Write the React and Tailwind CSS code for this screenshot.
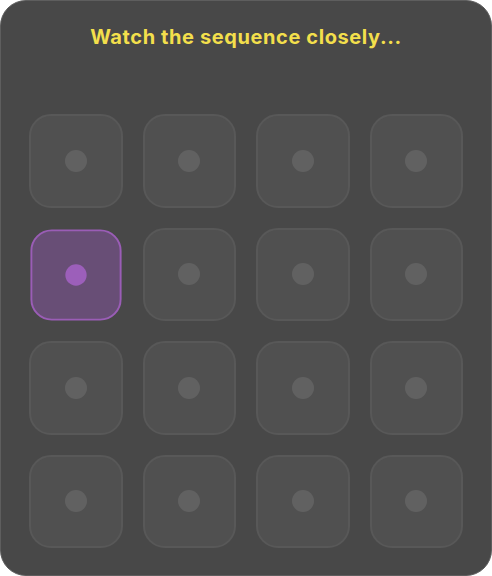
import React from 'react';

const ACTIVE = 4;

const Tile = ({ active }) => (
  <div
    className={`aspect-square rounded-[22px] border-2 flex items-center justify-center ${
      active
        ? 'bg-[#684e76] border-[#9a5db6] scale-[0.97]'
        : 'bg-[#505050] border-[#585858]'
    }`}
  >
    <div className={`w-[22px] h-[22px] rounded-full ${active ? 'bg-[#9c5fba]' : 'bg-[#616161]'}`} />
  </div>
);

export default function App() {
  return (
    <div className="w-[492px] h-[576px] bg-white">
      <div className="w-full h-full rounded-[26px] border border-[#5e5e5e] bg-[#484848] px-[28px] pt-[22px] pb-[28px] flex flex-col">
        <h1
          className="text-center text-[20px] leading-7 font-bold text-[#f3df4c] tracking-[0.6px]"
          style={{ fontFamily: 'Inter, "Noto Sans", sans-serif' }}
        >
          Watch the sequence closely...
        </h1>
        <div className="mt-[63px] grid grid-cols-4 gap-[20px]">
          {Array.from({ length: 16 }).map((_, i) => (
            <Tile key={i} active={i === ACTIVE} />
          ))}
        </div>
      </div>
    </div>
  );
}
